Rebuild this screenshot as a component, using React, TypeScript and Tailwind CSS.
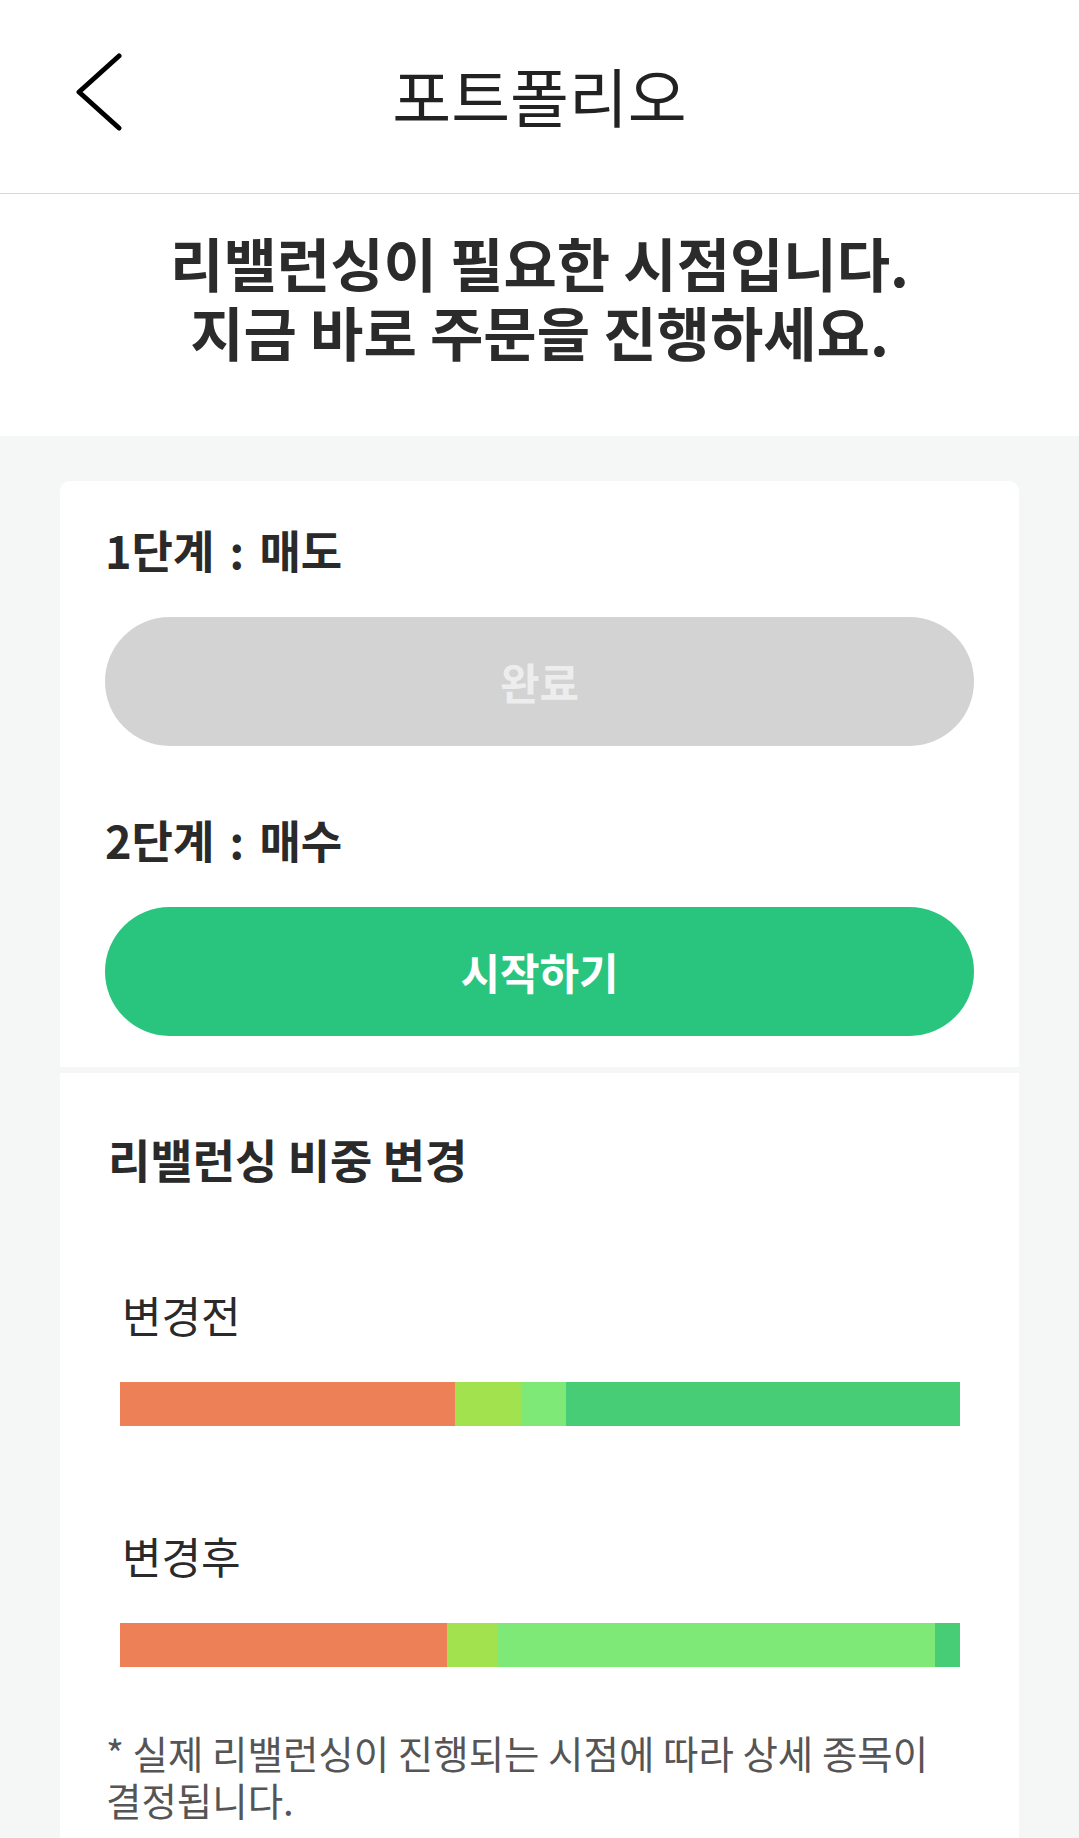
const before = [
    { color: "bg-[#ee8058]", width: 335 },
    { color: "bg-[#a3e24f]", width: 66 },
    { color: "bg-[#7fe977]", width: 45 },
    { color: "bg-[#48cd77]", width: 394 },
]

const after = [
    { color: "bg-[#ee8058]", width: 327 },
    { color: "bg-[#a3e24f]", width: 51 },
    { color: "bg-[#7fe977]", width: 437 },
    { color: "bg-[#48cd77]", width: 25 },
]

function WeightBar({ items }: { items: { color: string; width: number }[] }) {
    return (
        <div className="ml-[60px] flex h-[44px] w-[840px]">
            {items.map((item, index) => (
                <div key={index} className={`${item.color} h-full`} style={{ width: item.width }} />
            ))}
        </div>
    )
}

function App() {
    return (
        <div className="min-h-[1838px] bg-[#f5f7f6] font-['Noto_Sans_CJK_KR',sans-serif] text-[#2a2a2a]">
            <div className="grid h-[194px] grid-cols-[1fr_auto_1fr] items-center border-b border-[#d8d8d8] bg-white">
                <div className="pl-[74px] pb-[8px]">
                    <svg width="50" height="80" viewBox="0 0 50 80" fill="none">
                        <path d="M45 3 L5 39 L45 75" stroke="#000" strokeWidth="5" strokeLinecap="round" strokeLinejoin="round" />
                    </svg>
                </div>
                <h1 className="pb-[6px] text-[64px] font-normal leading-none text-[#222]">포트폴리오</h1>
                <div />
            </div>
            <div className="bg-white pt-[34px] pb-[70px] text-center text-[58px] font-bold leading-[69px] text-[#2b2b2b]">
                <p>리밸런싱이 필요한 시점입니다.</p>
                <p>지금 바로 주문을 진행하세요.</p>
            </div>
            <div className="px-[60px] pt-[45px]">
                <div className="rounded-t-[10px] bg-white px-[45px] pt-[49px] pb-[31px]">
                    <div className="flex h-[40px] items-center text-[45px] font-bold [word-spacing:5px]">1단계 : 매도</div>
                    <button type="button" className="mt-[47px] flex h-[129px] w-full items-center justify-center rounded-full bg-[#d3d3d3] text-[43px] font-bold text-[#ededed]">
                        완료
                    </button>
                    <div className="mt-[74px] flex h-[40px] items-center text-[45px] font-bold [word-spacing:5px]">2단계 : 매수</div>
                    <button type="button" className="mt-[47px] flex h-[129px] w-full items-center justify-center rounded-full bg-[#29c47e] text-[43px] font-bold text-white">
                        시작하기
                    </button>
                </div>
                <div className="mt-[6px] bg-white pt-[63px] pb-[60px]">
                    <div className="flex h-[44px] items-center px-[48px] text-[46px] font-bold">리밸런싱 비중 변경</div>
                    <div className="mt-[114px] flex h-[40px] items-center px-[62px] text-[43px]">변경전</div>
                    <div className="mt-[48px]">
                        <WeightBar items={before} />
                    </div>
                    <div className="mt-[109px] flex h-[40px] items-center px-[62px] text-[43px]">변경후</div>
                    <div className="mt-[48px]">
                        <WeightBar items={after} />
                    </div>
                    <p className="mt-[62px] px-[46px] text-[38.5px] leading-[47px] text-[#555]">
                        * 실제 리밸런싱이 진행되는 시점에 따라 상세 종목이
                        <br />
                        결정됩니다.
                    </p>
                </div>
            </div>
        </div>
    )
}

export default App
